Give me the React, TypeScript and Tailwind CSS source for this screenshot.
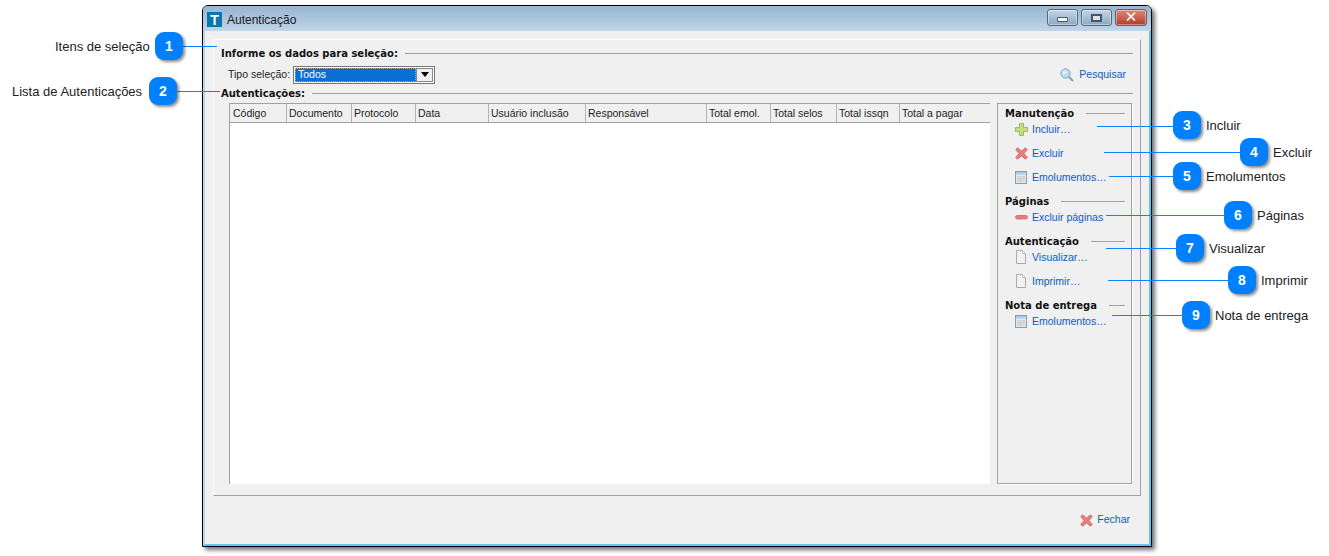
const ui = "[font-family:'Liberation_Sans',sans-serif] text-[10.5px]";
const heading = "[font-family:'DejaVu_Sans',sans-serif] text-[10px] font-bold text-[#111] leading-none";

const columns = [
  { label: 'Código', w: 'w-[57px] pl-[3px]' },
  { label: 'Documento', w: 'w-[65px] pl-[2px]' },
  { label: 'Protocolo', w: 'w-[64px] pl-[2px]' },
  { label: 'Data', w: 'w-[73px] pl-[2px]' },
  { label: 'Usuário inclusão', w: 'w-[97px] pl-[2px]' },
  { label: 'Responsável', w: 'w-[121px] pl-[2px]' },
  { label: 'Total emol.', w: 'w-[64px] pl-[2px]' },
  { label: 'Total selos', w: 'w-[66px] pl-[2px]' },
  { label: 'Total issqn', w: 'w-[63px] pl-[2px]' },
  { label: 'Total a pagar', w: 'flex-1 pl-[2px]' },
];

function PlusIcon() {
  return (
    <svg width="13" height="13" viewBox="0 0 13 13">
      <path d="M4.500 .5h4v4h4v4h-4v4h-4v-4h-4v-4h4z" fill="#c3de80" stroke="#9dbb5c" />
    </svg>
  );
}

function CrossIcon() {
  return (
    <svg width="13" height="13" viewBox="0 0 13 13">
      <path d="M2.500 .8 6.500 4l4-3.200 1.800 1.800L9 6.500l3.300 3.900-1.800 1.800-4-3.200-4 3.200-1.800-1.800L4 6.500.7 2.600z" fill="#ee7a7a" stroke="#c96a6a" strokeWidth=".8" />
    </svg>
  );
}

function MinusIcon() {
  return (
    <svg width="13" height="13" viewBox="0 0 13 13">
      <rect x=".5" y="4.500" width="12" height="3.500" rx="1.700" fill="#ee7a7a" stroke="#c96a6a" strokeWidth=".8" />
    </svg>
  );
}

function CalcIcon() {
  return (
    <svg width="12" height="13" viewBox="0 0 12 13">
      <rect x=".5" y=".5" width="11" height="12" fill="#e4e8ea" stroke="#8f9ba3" />
      <rect x="1" y="1" width="10" height="2.500" fill="#a8d0ee" />
      <path d="M2 6h8M2 8h8M2 10h8" stroke="#bcc2c6" />
    </svg>
  );
}

function DocIcon() {
  return (
    <svg width="12" height="14" viewBox="0 0 12 14">
      <path d="M1.500 .5h6l3 3v10h-9z" fill="#f2f2f2" stroke="#a8a8a8" />
      <path d="M7.500 .5v3h3" fill="#fff" stroke="#bdbdbd" />
    </svg>
  );
}

function SearchIcon() {
  return (
    <svg width="14" height="14" viewBox="0 0 14 14">
      <path d="M8.500 8.500 13 13" stroke="#9a9a9a" strokeWidth="1.800" />
      <circle cx="5.500" cy="5.500" r="4.700" fill="#bcdcf3" stroke="#7fa8c9" />
      <circle cx="4.500" cy="4.500" r="2" fill="#e6f3fb" />
    </svg>
  );
}

function SectionTitle({ title, gap, className = '' }: { title: string; gap: string; className?: string }) {
  return (
    <div className={`flex items-center ${className}`}>
      <span className={`${heading} translate-y-px whitespace-nowrap`}>{title}</span>
      <div className={`h-px flex-1 bg-[#a0a0a0] ${gap}`} />
    </div>
  );
}

function SideAction({ icon, label, className = '' }: { icon: React.ReactNode; label: string; className?: string }) {
  return (
    <div className={`flex h-4 items-center pl-[16px] ${className}`}>
      <span className="flex w-[17px] shrink-0 items-center">{icon}</span>
      <span className={`${ui} translate-y-px whitespace-nowrap text-[#0a5cc4]`}>{label}</span>
    </div>
  );
}

function WindowButton({ className, children }: { className: string; children: React.ReactNode }) {
  return (
    <div className={`flex h-[17px] items-center justify-center rounded-[3px] border border-[#56687c] shadow-[inset_0_0_0_1px_rgba(255,255,255,0.4)] ${className}`}>
      {children}
    </div>
  );
}

const callouts = [
  { n: 1, badge: 'left-[155px] top-[32px]', line: 'left-[183px] top-[46px] w-[34px]', label: 'Itens de seleção', text: 'left-[55px] top-[39px]' },
  { n: 2, badge: 'left-[149px] top-[77px]', line: 'left-[177px] top-[91px] w-[43px]', label: 'Lista de Autenticações', text: 'left-[12px] top-[84px]' },
  { n: 3, badge: 'left-[1173px] top-[111px]', line: 'left-[1097px] top-[126px] w-[76px]', label: 'Incluir', text: 'left-[1206px] top-[118px]' },
  { n: 4, badge: 'left-[1240px] top-[138px]', line: 'left-[1104px] top-[152px] w-[136px]', label: 'Excluir', text: 'left-[1273px] top-[145px]' },
  { n: 5, badge: 'left-[1173px] top-[162px]', line: 'left-[1109px] top-[176px] w-[64px]', label: 'Emolumentos', text: 'left-[1206px] top-[169px]' },
  { n: 6, badge: 'left-[1224px] top-[201px]', line: 'left-[1106px] top-[215px] w-[118px]', label: 'Páginas', text: 'left-[1257px] top-[208px]' },
  { n: 7, badge: 'left-[1176px] top-[234px]', line: 'left-[1106px] top-[248px] w-[70px]', label: 'Visualizar', text: 'left-[1209px] top-[241px]' },
  { n: 8, badge: 'left-[1228px] top-[266px]', line: 'left-[1108px] top-[280px] w-[120px]', label: 'Imprimir', text: 'left-[1261px] top-[273px]' },
  { n: 9, badge: 'left-[1182px] top-[301px]', line: 'left-[1112px] top-[315px] w-[70px]', label: 'Nota de entrega', text: 'left-[1215px] top-[308px]' },
];

export default function App() {
  return (
    <div className="relative h-[556px] w-[1329px] overflow-hidden bg-white pl-[202px] pt-[5px]">
      {/* janela */}
      <div className="flex h-[542px] w-[950px] flex-col rounded-t-[6px] border border-black bg-[#f0f0f0] shadow-[3px_3px_4px_rgba(0,0,0,0.55)]">
        <div className="flex h-[25px] shrink-0 items-center rounded-t-[5px] bg-gradient-to-b from-[#98b4d0] to-[#c0d5e9] pl-1 pr-1">
          <div className="mt-[2px] flex h-[15px] w-[15px] items-center justify-center bg-[#0b75ad] [font-family:'Liberation_Sans',sans-serif] text-[14px] font-bold leading-none text-white">
            T
          </div>
          <span className="ml-[5px] mt-[2px] flex-1 [font-family:'Liberation_Sans',sans-serif] text-[12px] text-[#1a1a1a]">Autenticação</span>
          <div className="flex gap-[3px] pb-[2px]">
            <WindowButton className="w-[31px] bg-gradient-to-b from-[#c5d6e6] to-[#8ba8c3]">
              <div className="mt-1 h-[5px] w-[11px] rounded-[1px] border border-[#47566a] bg-white" />
            </WindowButton>
            <WindowButton className="w-[31px] bg-gradient-to-b from-[#c5d6e6] to-[#8ba8c3]">
              <div className="h-[8px] w-[11px] border-2 border-[#47566a] bg-[#d8e2ec]" />
            </WindowButton>
            <WindowButton className="w-[32px] bg-gradient-to-b from-[#dd8a78] to-[#b23a28]">
              <span className="[font-family:'DejaVu_Sans',sans-serif] text-[15px] font-bold leading-none text-white">✕</span>
            </WindowButton>
          </div>
        </div>

        <div className="flex min-h-0 flex-1 flex-col border-b-2 border-l-2 border-r-2 border-b-[#62c6ee] border-l-[#bcd4ea] border-r-[#58c5f0] bg-[#f0f0f0] px-[8px] pt-2">
          {/* grupo principal */}
          <div className="flex h-[457px] shrink-0 flex-col border border-b-[#a0a0a0] border-l-white border-r-[#a0a0a0] border-t-white pl-[7px] pr-[7px] pt-[7px]">
            <SectionTitle title="Informe os dados para seleção:" gap="ml-[7px]" className="h-[12px]" />
            <div className="mt-[6px] flex h-[19px] items-center pl-[7px]">
              <span className={`${ui} w-[65px] whitespace-nowrap text-[#222]`}>Tipo seleção:</span>
              <div className="flex h-[18px] w-[142px] border border-[#777] bg-white p-px">
                <div className="flex flex-1 items-center bg-[#0a6fd2] outline-1 -outline-offset-1 outline-dotted outline-[#f0a030]">
                  <span className={`${ui} pl-[3px] text-white`}>Todos</span>
                </div>
                <div className="flex w-[17px] items-center justify-center border border-[#888] bg-[#f0f0f0]">
                  <div className="h-0 w-0 border-x-[4px] border-t-[5px] border-x-transparent border-t-black" />
                </div>
              </div>
              <div className="ml-auto flex items-center pr-[7px]">
                <SearchIcon />
                <span className={`${ui} ml-[5px] text-[#0a5cc4]`}>Pesquisar</span>
              </div>
            </div>
            <SectionTitle title="Autenticações:" gap="ml-[7px]" className="mt-[3px] h-[12px]" />

            <div className="mt-[4px] flex min-h-0 flex-1 pb-[11px] pl-[8px]">
              {/* grade */}
              <div className="flex w-[761px] shrink-0 flex-col border-l border-t border-[#a0a0a0] bg-white">
                <div className="flex h-[19px] shrink-0 border-b border-[#a0a0a0] bg-[#f0f0f0]">
                  {columns.map((col) => (
                    <div key={col.label} className={`${ui} ${col.w} flex items-center whitespace-nowrap border-r border-[#b4b4b4] pt-[2px] text-[#222] last:border-r-0`}>
                      {col.label}
                    </div>
                  ))}
                </div>
              </div>

              {/* ações */}
              <div className="ml-[7px] flex w-[135px] shrink-0 flex-col border border-[#a0a0a0] px-px pt-[4px] shadow-[1px_1px_0_#fff]">
                <SectionTitle title="Manutenção" gap="ml-[12px] mr-[5px]" className="h-[10px] pl-[6px]" />
                <SideAction icon={<PlusIcon />} label="Incluir…" className="mt-[3px]" />
                <SideAction icon={<CrossIcon />} label="Excluir" className="mt-2" />
                <SideAction icon={<CalcIcon />} label="Emolumentos…" className="mt-2" />
                <SectionTitle title="Páginas" gap="ml-[12px] mr-[5px]" className="mt-[11px] h-[10px] pl-[6px]" />
                <SideAction icon={<MinusIcon />} label="Excluir páginas" className="mt-[3px]" />
                <SectionTitle title="Autenticação" gap="ml-[12px] mr-[5px]" className="mt-[11px] h-[10px] pl-[6px]" />
                <SideAction icon={<DocIcon />} label="Visualizar…" className="mt-[3px]" />
                <SideAction icon={<DocIcon />} label="Imprimir…" className="mt-2" />
                <SectionTitle title="Nota de entrega" gap="ml-[12px] mr-[5px]" className="mt-[11px] h-[10px] pl-[6px]" />
                <SideAction icon={<CalcIcon />} label="Emolumentos…" className="mt-[3px]" />
              </div>
            </div>
          </div>

          {/* rodapé */}
          <div className="flex flex-1 items-center justify-end pr-[11px]">
            <CrossIcon />
            <span className={`${ui} ml-[4px] text-[#0a5cc4]`}>Fechar</span>
          </div>
        </div>
      </div>

      {/* marcadores */}
      {callouts.map((c) => (
        <div key={c.n}>
          <div className={`absolute h-px bg-[#0a84ff] ${c.line}`} />
          <div className={`absolute flex h-[28px] w-[28px] items-center justify-center rounded-[9px] bg-[#0080ff] [font-family:'Liberation_Sans',sans-serif] text-[14px] font-bold text-white shadow-[2px_2px_3px_rgba(0,0,0,0.45)] ${c.badge}`}>
            {c.n}
          </div>
          <span className={`absolute whitespace-nowrap [font-family:'Liberation_Sans',sans-serif] text-[13px] leading-4 text-[#222] ${c.text}`}>
            {c.label}
          </span>
        </div>
      ))}
    </div>
  );
}
